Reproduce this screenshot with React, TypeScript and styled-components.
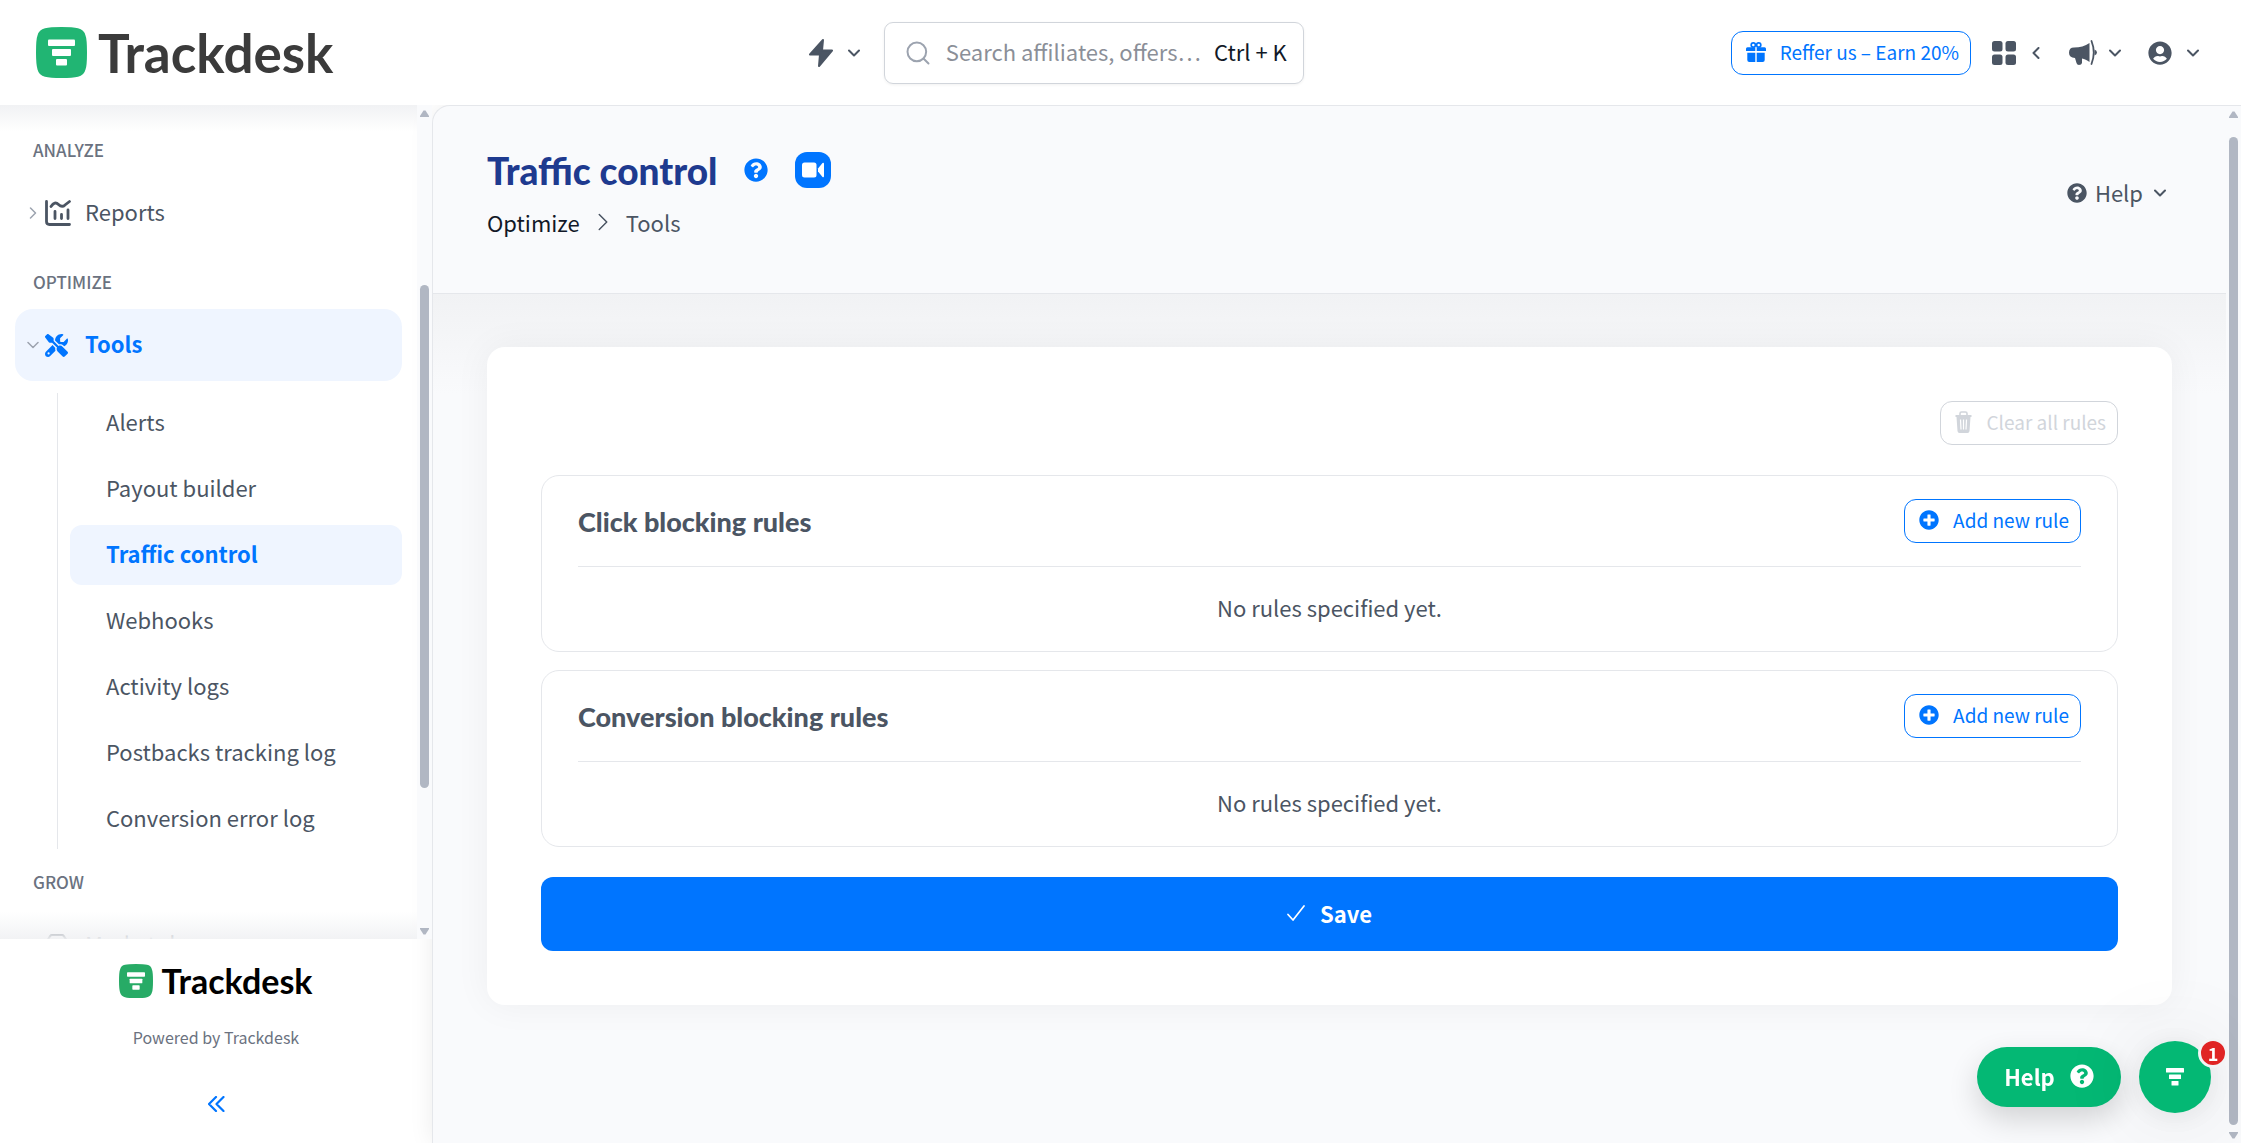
import React from 'react';
import styled, { createGlobalStyle } from 'styled-components';
import { FaQuestionCircle, FaPlusCircle, FaUserCircle } from 'react-icons/fa';
import { FaScrewdriverWrench } from 'react-icons/fa6';
import { Search, Store } from 'lucide-react';

const sans = '"Noto Sans CJK SC", "Noto Sans", sans-serif';
const display = 'Lato, "Open Sans", sans-serif';
const c = {
  blue: '#0075ff', navy: '#1e3a8f', text: '#4b5563', muted: '#6b7280', ink: '#111827',
  line: '#e5e7eb', page: '#f9fafc', soft: '#eff5ff', green: '#04b874', bar: '#b1b7c3',
};

const Global = createGlobalStyle`
  *, *::before, *::after { box-sizing: border-box; }
  body { margin: 0; background: #fff; color: ${c.text}; font-family: ${sans}; font-size: 22px; line-height: 36px; }
  button, input, kbd { font: inherit; color: inherit; }
  button { margin: 0; padding: 0; border: 0; background: none; cursor: pointer; }
  a { color: inherit; text-decoration: none; }
  h1, h2, h3, p, ul, ol { margin: 0; padding: 0; list-style: none; }
  svg { display: block; flex: none; }
`;

const Page = styled.div`
  height: 100vh;
  display: flex;
  flex-direction: column;
  overflow: hidden;
`;
const TopBar = styled.header`
  flex: none;
  height: 105px;
  padding: 0 42px 0 36px;
  display: flex;
  align-items: center;
  justify-content: space-between;
  background: #fff;
  position: relative;
  z-index: 2;
`;
const BrandArea = styled.div`
  width: 346px;
  display: flex;
`;
const Brand = styled.a<{ $small?: boolean }>`
  display: inline-flex;
  align-items: center;
  gap: ${p => (p.$small ? 8 : 11)}px;
  font-family: ${display};
  font-weight: 700;
  font-size: ${p => (p.$small ? 34 : 53)}px;
  line-height: ${p => (p.$small ? 34 : 52)}px;
  color: ${p => (p.$small ? '#000' : '#3b3b3b')};
`;
const Middle = styled.div`
  display: flex;
  align-items: center;
  gap: 24px;
`;
const IconMenu = styled.button<{ $gap: number }>`
  display: flex;
  align-items: center;
  gap: ${p => p.$gap}px;
  color: ${c.text};
`;
const SearchBox = styled.label`
  width: 420px;
  height: 62px;
  padding: 0 16px 0 19px;
  display: flex;
  align-items: center;
  gap: 14px;
  border: 1px solid #d1d5db;
  border-radius: 9px;
  box-shadow: 0 1px 3px rgba(0, 0, 0, 0.06);
  input {
    flex: 1;
    min-width: 0;
    padding: 0 0 3px;
    border: 0;
    outline: 0;
    background: none;
  }
  input::placeholder { color: #8b8f98; opacity: 1; }
  kbd { padding-bottom: 3px; color: ${c.ink}; }
`;
const Actions = styled.div`
  display: flex;
  align-items: center;
  gap: 27px;
  & > :first-child { margin-right: -6px; }
`;
const Outline = styled.button`
  height: 44px;
  padding: 0 11px 2px 14px;
  display: flex;
  align-items: center;
  gap: 14px;
  border: 1px solid ${c.blue};
  border-radius: 12px;
  background: #fff;
  color: ${c.blue};
  font-size: 19px;
  line-height: 30px;
  white-space: nowrap;
  &:disabled { color: #d1d5db; border-color: #d1d5db; cursor: default; }
`;
const Body = styled.div`
  flex: 1;
  min-height: 0;
  display: flex;
`;
const Sidebar = styled.aside`
  flex: none;
  width: 432px;
  display: flex;
  flex-direction: column;
`;
const NavArea = styled.div`
  flex: 1;
  min-height: 0;
  display: flex;
  position: relative;
  z-index: 1;
`;
const Nav = styled.nav`
  flex: 1;
  min-width: 0;
  overflow: hidden;
  padding: 12px 15px 0;
  position: relative;
  &::before, &::after {
    content: '';
    position: absolute;
    left: 0;
    right: 0;
    height: 27px;
    pointer-events: none;
  }
  &::before { top: 0; background: linear-gradient(#f1f2f4, rgba(255, 255, 255, 0)); }
  &::after { bottom: 0; background: linear-gradient(rgba(255, 255, 255, 0), rgba(241, 242, 244, 0.95)); }
`;
const NavLabel = styled.h3`
  height: 60px;
  padding: 18px 18px 0;
  font-size: 17px;
  line-height: 30px;
  font-weight: 500;
  color: ${c.muted};
`;
const NavItem = styled.a<{ $active?: boolean }>`
  height: 72px;
  padding-left: 12px;
  display: grid;
  grid-template-columns: 18px 26px auto;
  justify-content: start;
  align-items: center;
  border-radius: 18px;
  background: ${p => (p.$active ? c.soft : 'transparent')};
  color: ${p => (p.$active ? c.blue : c.text)};
  font-weight: ${p => (p.$active ? 700 : 400)};
  & > :first-child { color: #9ca3af; }
  span { padding: 0 0 4px 14px; }
`;
const SubList = styled.ul`
  margin: 12px 0 0 42px;
  padding-left: 12px;
  border-left: 1px solid ${c.line};
  display: flex;
  flex-direction: column;
  gap: 6px;
`;
const SubItem = styled.a<{ $active?: boolean }>`
  height: 60px;
  padding: 0 0 4px 36px;
  display: flex;
  align-items: center;
  border-radius: 12px;
  background: ${p => (p.$active ? c.soft : 'transparent')};
  color: ${p => (p.$active ? c.blue : c.text)};
  font-weight: ${p => (p.$active ? 700 : 400)};
`;
const SideFooter = styled.footer`
  flex: none;
  height: 204px;
  padding-top: 25px;
  display: flex;
  flex-direction: column;
  align-items: center;
  p { margin-top: 24px; font-size: 16px; line-height: 30px; color: ${c.muted}; }
  button { margin-top: 44px; color: ${c.blue}; }
`;
const Track = styled.div`
  flex: none;
  width: 15px;
  padding: 5px 3px 4px;
  display: flex;
  flex-direction: column;
  justify-content: space-between;
  background: ${c.page};
  color: ${c.bar};
`;
const Rail = styled.div<{ $before: number; $thumb: number; $after: number }>`
  flex: 1;
  display: grid;
  grid-template-rows: ${p => `${p.$before}fr ${p.$thumb}fr ${p.$after}fr`};
  &::before { content: ''; grid-row: 2; border-radius: 5px; background: ${c.bar}; }
`;
const Main = styled.main`
  flex: 1;
  min-width: 0;
  display: flex;
  border: solid ${c.line};
  border-width: 1px 0 0 1px;
  border-top-left-radius: 18px;
  overflow: hidden;
  background: ${c.page};
  box-shadow: 0 0 24px rgba(0, 0, 0, 0.08);
`;
const Content = styled.div`
  flex: 1;
  min-width: 0;
`;
const PageHead = styled.div`
  height: 188px;
  padding: 0 54px 13px;
  display: flex;
  align-items: center;
  justify-content: space-between;
  border-bottom: 1px solid ${c.line};
`;
const TitleRow = styled.div`
  display: flex;
  align-items: center;
  h1 { margin-right: 27px; padding-top: 2px; font-family: ${display}; font-weight: 900; font-size: 37px; line-height: 46px; color: ${c.navy}; }
  & > button { color: ${c.blue}; }
`;
const VideoButton = styled.button`
  width: 36px;
  height: 36px;
  margin-left: 27px;
  display: grid;
  place-items: center;
  border-radius: 12px;
  background: ${c.blue};
`;
const Crumbs = styled.ol`
  margin-top: 10px;
  display: flex;
  align-items: center;
  gap: 14px;
  a { color: ${c.ink}; }
`;
const HelpMenu = styled.button`
  padding-right: 6px;
  display: flex;
  align-items: center;
  gap: 8px;
  color: ${c.text};
  & > span { padding-bottom: 3px; }
  & > :last-child { margin-left: 3px; }
`;
const Canvas = styled.div`
  height: 100%;
  padding: 53px 54px;
  background: linear-gradient(#f1f2f4, ${c.page} 100px);
`;
const Card = styled.section`
  padding: 54px;
  border-radius: 18px;
  background: #fff;
  box-shadow: 0 0 36px rgba(0, 0, 0, 0.05);
`;
const CardTools = styled.div`
  display: flex;
  justify-content: flex-end;
  margin-bottom: 30px;
`;
const Rules = styled.div`
  display: flex;
  flex-direction: column;
  gap: 18px;
`;
const RuleBox = styled.section`
  padding: 0 36px;
  border: 1px solid ${c.line};
  border-radius: 18px;
`;
const RuleHead = styled.div`
  padding: 23px 0;
  display: flex;
  align-items: center;
  justify-content: space-between;
  border-bottom: 1px solid ${c.line};
  h2 { padding-top: 2px; font-family: ${display}; font-weight: 900; font-size: 27px; line-height: 36px; }
`;
const Empty = styled.p`
  padding: 22px 0 26px;
  text-align: center;
`;
const Save = styled.button`
  width: 100%;
  height: 74px;
  margin-top: 30px;
  padding-bottom: 2px;
  display: flex;
  align-items: center;
  justify-content: center;
  gap: 15px;
  border-radius: 12px;
  background: ${c.blue};
  color: #fff;
  font-weight: 700;
`;
const Floating = styled.div`
  position: fixed;
  right: 30px;
  bottom: 30px;
  z-index: 5;
  display: flex;
  align-items: center;
  gap: 18px;
`;
const HelpPill = styled.button`
  width: 144px;
  height: 60px;
  padding-bottom: 2px;
  display: flex;
  align-items: center;
  justify-content: center;
  gap: 15px;
  border-radius: 30px;
  background: ${c.green};
  color: #fff;
  font-weight: 700;
  box-shadow: 0 12px 30px rgba(0, 0, 0, 0.16);
`;
const Launcher = styled.button`
  width: 72px;
  height: 72px;
  display: grid;
  place-items: center;
  position: relative;
  border-radius: 50%;
  background: ${c.green};
  box-shadow: 0 3px 90px rgba(0, 0, 0, 0.12), 0 3px 30px rgba(0, 0, 0, 0.08);
`;
const Badge = styled.span`
  position: absolute;
  top: -3px;
  right: -17px;
  width: 30px;
  height: 30px;
  border: 3px solid #f3f4f5;
  border-radius: 50%;
  background: #e02424;
  color: #fff;
  font-size: 18px;
  line-height: 24px;
  font-weight: 700;
  text-align: center;
`;

type Dir = 'down' | 'left' | 'right';
const turn: Record<Dir, number> = { down: 0, left: 90, right: -90 };
const Chevron = ({ dir = 'down', size = 12, weight = 2 }: { dir?: Dir; size?: number; weight?: number }) => (
  <svg width={size} height={size} viewBox="0 0 12 12" fill="none" stroke="currentColor" strokeWidth={weight}
    strokeLinecap="round" strokeLinejoin="round" aria-hidden="true">
    <path d="M1 3.5 6 8.5 11 3.5" transform={`rotate(${turn[dir]} 6 6)`} />
  </svg>
);

const LogoMark = ({ size, fill }: { size: number; fill: string }) => (
  <svg width={size} height={size} viewBox="0 0 51 51" aria-hidden="true">
    <path fill={fill} d="M0 25.5Q0 12 1.500 8.500 3 2.500 9 1.300 14 0 25.500 0T42 1.300Q48 2.500 49.500 8.500 51 12 51 25.500T49.500 42.500Q48 48.500 42 49.700 37 51 25.500 51T9 49.700Q3 48.500 1.500 42.500 0 37 0 25.500Z" />
    <g fill="#fff">
      <rect x="12" y="12.500" width="27" height="6.500" rx="1" />
      <rect x="16" y="22" width="19" height="7" rx="1" />
      <rect x="20" y="32" width="11" height="6.500" rx="1" />
    </g>
  </svg>
);

const Bolt = () => (
  <svg width="24" height="28" viewBox="0 0 24 28" fill="currentColor" stroke="currentColor" strokeWidth="2" strokeLinejoin="round" aria-hidden="true">
    <path d="M14 1 1 15.500H11L10 27 23 11.500H13Z" />
  </svg>
);
const Reports = () => (
  <svg width="26" height="26" viewBox="0 0 26 26" fill="none" stroke="currentColor" strokeWidth="2.800" strokeLinecap="round" aria-hidden="true">
    <path d="M1.500 1.500V21.500Q1.500 24.500 4.500 24.500H24.500" />
    <path d="M6 6.500C8.500 2.500 11 2 13.500 4.500S18.500 6.500 20 5L24.500 1.500" />
    <path d="M10 11.500V18.500M16.500 14.500V18.500M23 10V18.500" />
  </svg>
);
const Gift = () => (
  <svg width="20" height="20" viewBox="0 0 20 20" fill="currentColor" aria-hidden="true">
    <g fill="none" stroke="currentColor" strokeWidth="1.700"><circle cx="7.300" cy="3" r="2.100" /><circle cx="12.700" cy="3" r="2.100" /></g>
    <path d="M1.500 5.300H9.300V9H0V6.800Q0 5.300 1.500 5.300ZM10.700 5.300H18.500Q20 5.300 20 6.800V9H10.700Z" />
    <path d="M1.300 10.700H9.300V20H3.300Q1.300 20 1.300 18ZM10.700 10.700H18.700V18Q18.700 20 16.700 20H10.700Z" />
  </svg>
);
const Grid4 = () => (
  <svg width="24" height="24" viewBox="0 0 24 24" fill="currentColor" aria-hidden="true">
    <rect width="10.500" height="10.500" rx="2.500" /><rect x="13.500" width="10.500" height="10.500" rx="2.500" />
    <rect y="13.500" width="10.500" height="10.500" rx="2.500" /><rect x="13.500" y="13.500" width="10.500" height="10.500" rx="2.500" />
  </svg>
);
const Megaphone = () => (
  <svg width="28" height="25" viewBox="0 0 28 25" fill="currentColor" aria-hidden="true">
    <path d="M5 7.500C11 7.500 16 6 20.500 3V22C18 20 15.500 19 13 18.500V23Q12.500 25 10 25 8 25 7.500 23L6 18Q0 17.500 0 12.700 0 7.500 5 7.500Z" />
    <path d="M22.500 1Q27 12.500 22.500 24" fill="none" stroke="currentColor" strokeWidth="1.800" strokeLinecap="round" />
    <path d="M25.500 9.500Q28 10.500 28 12.500T25.500 15.500Z" />
  </svg>
);
const Camera = () => (
  <svg width="22" height="16" viewBox="0 0 22 16" fill="#fff" aria-hidden="true">
    <rect width="14.500" height="15" y=".5" rx="2.500" />
    <path d="M16 6.500 20.500 1Q22 0 22 2V14Q22 16 20.500 15L16 9.500Z" />
  </svg>
);
const Trash = () => (
  <svg width="17" height="22" viewBox="0 0 17 22" aria-hidden="true">
    <path d="M5 4V2.500Q5 1 6.500 1H10.500Q12 1 12 2.500V4" fill="none" stroke="currentColor" strokeWidth="1.600" />
    <path fill="currentColor" d="M.5 4H16.500V6H15.500L14.500 20Q14.300 22 12.500 22H4.500Q2.700 22 2.500 20L1.500 6H.5Z" />
    <path d="M5.500 8.500 6 18.500M8.500 8.500V18.500M11.500 8.500 11 18.500" stroke="#fff" strokeWidth="1.200" />
  </svg>
);
const Check = () => (
  <svg width="18" height="16" viewBox="0 0 18 16" fill="none" stroke="#fff" strokeWidth="1.700" strokeLinecap="round" strokeLinejoin="round" aria-hidden="true">
    <path d="M1 9.500 6 15 17 1" />
  </svg>
);
const DoubleLeft = () => (
  <svg width="17" height="16" viewBox="0 0 17 16" fill="none" stroke="currentColor" strokeWidth="2.200" strokeLinecap="round" strokeLinejoin="round" aria-hidden="true">
    <path d="M8 1 1 8 8 15M15.500 1 8.500 8 15.500 15" />
  </svg>
);
const Funnel = () => (
  <svg width="18" height="18" viewBox="0 0 18 18" fill="#fff" aria-hidden="true">
    <rect width="18" height="4.500" rx=".5" /><rect x="3" y="6.500" width="12" height="4.500" rx=".5" /><rect x="5.500" y="13" width="7" height="4.500" rx=".5" />
  </svg>
);
const Arrow = ({ up }: { up?: boolean }) => (
  <svg width="9" height="7" viewBox="0 0 9 7" fill="currentColor" aria-hidden="true">
    <path d={up ? 'M3.500 .5H5.500L9 6V7H0V6Z' : 'M3.500 6.500H5.500L9 1V0H0V1Z'} />
  </svg>
);

const ScrollTrack = ({ before, thumb, after }: { before: number; thumb: number; after: number }) => (
  <Track aria-hidden="true">
    <Arrow up />
    <Rail $before={before} $thumb={thumb} $after={after} />
    <Arrow />
  </Track>
);

const RuleSection = ({ title }: { title: string }) => (
  <RuleBox>
    <RuleHead>
      <h2>{title}</h2>
      <Outline type="button"><FaPlusCircle size={20} />Add new rule</Outline>
    </RuleHead>
    <Empty>No rules specified yet.</Empty>
  </RuleBox>
);

const toolLinks = ['Alerts', 'Payout builder', 'Traffic control', 'Webhooks', 'Activity logs', 'Postbacks tracking log', 'Conversion error log'];

export default function App() {
  return (
    <Page>
      <Global />
      <TopBar>
        <BrandArea><Brand href="#"><LogoMark size={51} fill="#21b573" />Trackdesk</Brand></BrandArea>
        <Middle>
          <IconMenu $gap={15} type="button" aria-label="Quick actions"><Bolt /><Chevron /></IconMenu>
          <SearchBox>
            <Search size={28} strokeWidth={1.700} color="#9ca3af" />
            <input type="text" aria-label="Search" placeholder="Search affiliates, offers…" />
            <kbd>Ctrl + K</kbd>
          </SearchBox>
        </Middle>
        <Actions>
          <Outline type="button"><Gift />Reffer us – Earn 20%</Outline>
          <IconMenu $gap={14} type="button" aria-label="Apps"><Grid4 /><Chevron dir="left" /></IconMenu>
          <IconMenu $gap={12} type="button" aria-label="Announcements"><Megaphone /><Chevron /></IconMenu>
          <IconMenu $gap={15} type="button" aria-label="Account"><FaUserCircle size={24} /><Chevron /></IconMenu>
        </Actions>
      </TopBar>
      <Body>
        <Sidebar>
          <NavArea>
            <Nav>
              <NavLabel>ANALYZE</NavLabel>
              <NavItem href="#"><Chevron dir="right" weight={1.500} /><Reports /><span>Reports</span></NavItem>
              <NavLabel>OPTIMIZE</NavLabel>
              <NavItem href="#" $active><Chevron weight={1.500} /><FaScrewdriverWrench size={23} /><span>Tools</span></NavItem>
              <SubList>
                {toolLinks.map(t => <li key={t}><SubItem href="#" $active={t === 'Traffic control'}>{t}</SubItem></li>)}
              </SubList>
              <NavLabel>GROW</NavLabel>
              <NavItem href="#"><i /><Store size={24} /><span>Marketplace</span></NavItem>
            </Nav>
            <ScrollTrack before={168} thumb={503} after={140} />
          </NavArea>
          <SideFooter>
            <Brand $small href="#"><LogoMark size={34} fill="#27ab66" />Trackdesk</Brand>
            <p>Powered by Trackdesk</p>
            <button type="button" aria-label="Collapse menu"><DoubleLeft /></button>
          </SideFooter>
        </Sidebar>
        <Main>
          <Content>
            <PageHead>
              <div>
                <TitleRow>
                  <h1>Traffic control</h1>
                  <button type="button" aria-label="About this page"><FaQuestionCircle size={24} /></button>
                  <VideoButton type="button" aria-label="Watch video"><Camera /></VideoButton>
                </TitleRow>
                <Crumbs>
                  <li><a href="#">Optimize</a></li>
                  <li aria-hidden="true"><Chevron dir="right" size={18} weight={1} /></li>
                  <li>Tools</li>
                </Crumbs>
              </div>
              <HelpMenu type="button"><FaQuestionCircle size={20} /><span>Help</span><Chevron /></HelpMenu>
            </PageHead>
            <Canvas>
              <Card>
                <CardTools><Outline type="button" disabled><Trash />Clear all rules</Outline></CardTools>
                <Rules>
                  <RuleSection title="Click blocking rules" />
                  <RuleSection title="Conversion blocking rules" />
                </Rules>
                <Save type="button"><Check />Save</Save>
              </Card>
            </Canvas>
          </Content>
          <ScrollTrack before={19} thumb={988} after={7} />
        </Main>
      </Body>
      <Floating>
        <HelpPill type="button">Help<FaQuestionCircle size={24} /></HelpPill>
        <Launcher type="button" aria-label="Open chat"><Funnel /><Badge>1</Badge></Launcher>
      </Floating>
    </Page>
  );
}
